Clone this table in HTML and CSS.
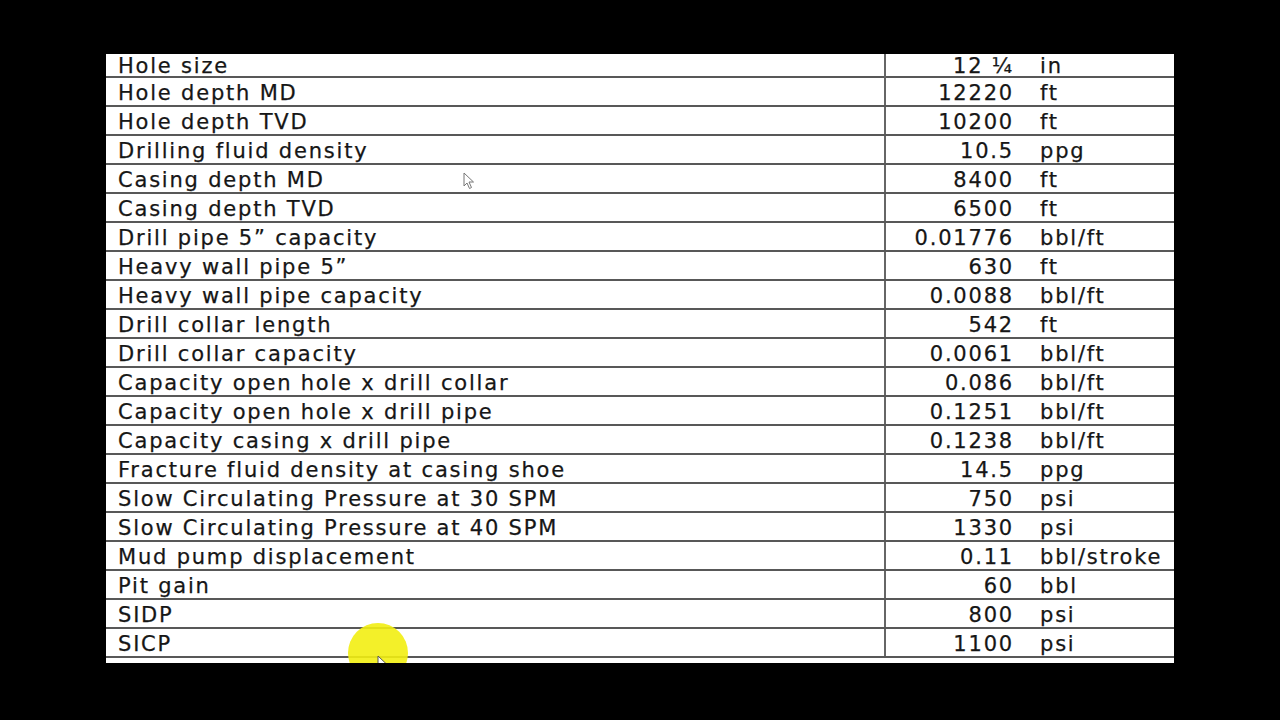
FILE: index.html
```html
<!DOCTYPE html>
<html>
<head>
<meta charset="utf-8">
<link rel="stylesheet" href="styles.css">
</head>
<body>
<div class="sheet">
  <div class="rows">
    <div class="row row-first"><div class="label">Hole size</div><div class="value">12 ¼</div><div class="unit">in</div></div>
    <div class="row"><div class="label">Hole depth MD</div><div class="value">12220</div><div class="unit">ft</div></div>
    <div class="row"><div class="label">Hole depth TVD</div><div class="value">10200</div><div class="unit">ft</div></div>
    <div class="row"><div class="label">Drilling fluid density</div><div class="value">10.5</div><div class="unit">ppg</div></div>
    <div class="row"><div class="label">Casing depth MD</div><div class="value">8400</div><div class="unit">ft</div></div>
    <div class="row"><div class="label">Casing depth TVD</div><div class="value">6500</div><div class="unit">ft</div></div>
    <div class="row"><div class="label">Drill pipe 5” capacity</div><div class="value">0.01776</div><div class="unit">bbl/ft</div></div>
    <div class="row"><div class="label">Heavy wall pipe 5”</div><div class="value">630</div><div class="unit">ft</div></div>
    <div class="row"><div class="label">Heavy wall pipe capacity</div><div class="value">0.0088</div><div class="unit">bbl/ft</div></div>
    <div class="row"><div class="label">Drill collar length</div><div class="value">542</div><div class="unit">ft</div></div>
    <div class="row"><div class="label">Drill collar capacity</div><div class="value">0.0061</div><div class="unit">bbl/ft</div></div>
    <div class="row"><div class="label">Capacity open hole x drill collar</div><div class="value">0.086</div><div class="unit">bbl/ft</div></div>
    <div class="row"><div class="label">Capacity open hole x drill pipe</div><div class="value">0.1251</div><div class="unit">bbl/ft</div></div>
    <div class="row"><div class="label">Capacity casing x drill pipe</div><div class="value">0.1238</div><div class="unit">bbl/ft</div></div>
    <div class="row"><div class="label">Fracture fluid density at casing shoe</div><div class="value">14.5</div><div class="unit">ppg</div></div>
    <div class="row"><div class="label">Slow Circulating Pressure at 30 SPM</div><div class="value">750</div><div class="unit">psi</div></div>
    <div class="row"><div class="label">Slow Circulating Pressure at 40 SPM</div><div class="value">1330</div><div class="unit">psi</div></div>
    <div class="row"><div class="label">Mud pump displacement</div><div class="value">0.11</div><div class="unit">bbl/stroke</div></div>
    <div class="row"><div class="label">Pit gain</div><div class="value">60</div><div class="unit">bbl</div></div>
    <div class="row"><div class="label">SIDP</div><div class="value">800</div><div class="unit">psi</div></div>
    <div class="row"><div class="label">SICP</div><div class="value">1100</div><div class="unit">psi</div></div>
  </div>
  <div class="highlight"></div>
  <svg class="cursor cursor-top" width="12" height="18" viewBox="0 0 12 18"><path d="M1 1 L1 14 L4 11 L6.5 16.5 L8.5 15.5 L6 10 L10.5 10 Z" fill="#fff" stroke="#777" stroke-width="1"/></svg>
  <svg class="cursor cursor-bottom" width="12" height="18" viewBox="0 0 12 18"><path d="M1 1 L1 14 L4 11 L6.5 16.5 L8.5 15.5 L6 10 L10.5 10 Z" fill="#fff" stroke="#555" stroke-width="1"/></svg>
</div>
</body>
</html>
```
FILE: styles.css
```css
html, body {
  margin: 0;
  padding: 0;
  background: #000;
}
body {
  width: 1280px;
  height: 720px;
  overflow: hidden;
}
.sheet {
  position: relative;
  margin: 54px 0 0 106px;
  width: 1068px;
  height: 609px;
  background: #fff;
  overflow: hidden;
  font-family: "DejaVu Sans", Verdana, sans-serif;
  font-size: 21px;
  letter-spacing: 1.8px;
  color: #161616;
  -webkit-text-stroke: 0.25px #161616;
}
.row {
  display: grid;
  grid-template-columns: 780px 128px 1fr;
  height: 29px;
  box-sizing: border-box;
  border-bottom: 2px solid #585858;
  align-items: center;
  padding-top: 3px;
}
.row-first {
  height: 24px;
  padding-top: 0;
}
.label {
  align-self: stretch;
  display: flex;
  align-items: center;
  margin-top: -3px;
  padding-top: 3px;
  padding-left: 12px;
  border-right: 2px solid #666;
  box-sizing: border-box;
}
.row-first .label {
  margin-top: 0;
  padding-top: 0;
}
.value {
  text-align: right;
}
.unit {
  padding-left: 26px;
}
.highlight {
  position: absolute;
  left: 242px;
  top: 569px;
  width: 60px;
  height: 60px;
  border-radius: 50%;
  background: #f2ee12;
  opacity: 0.9;
}
.cursor {
  position: absolute;
}
.cursor-top {
  left: 357px;
  top: 118px;
}
.cursor-bottom {
  left: 271px;
  top: 601px;
}
```
